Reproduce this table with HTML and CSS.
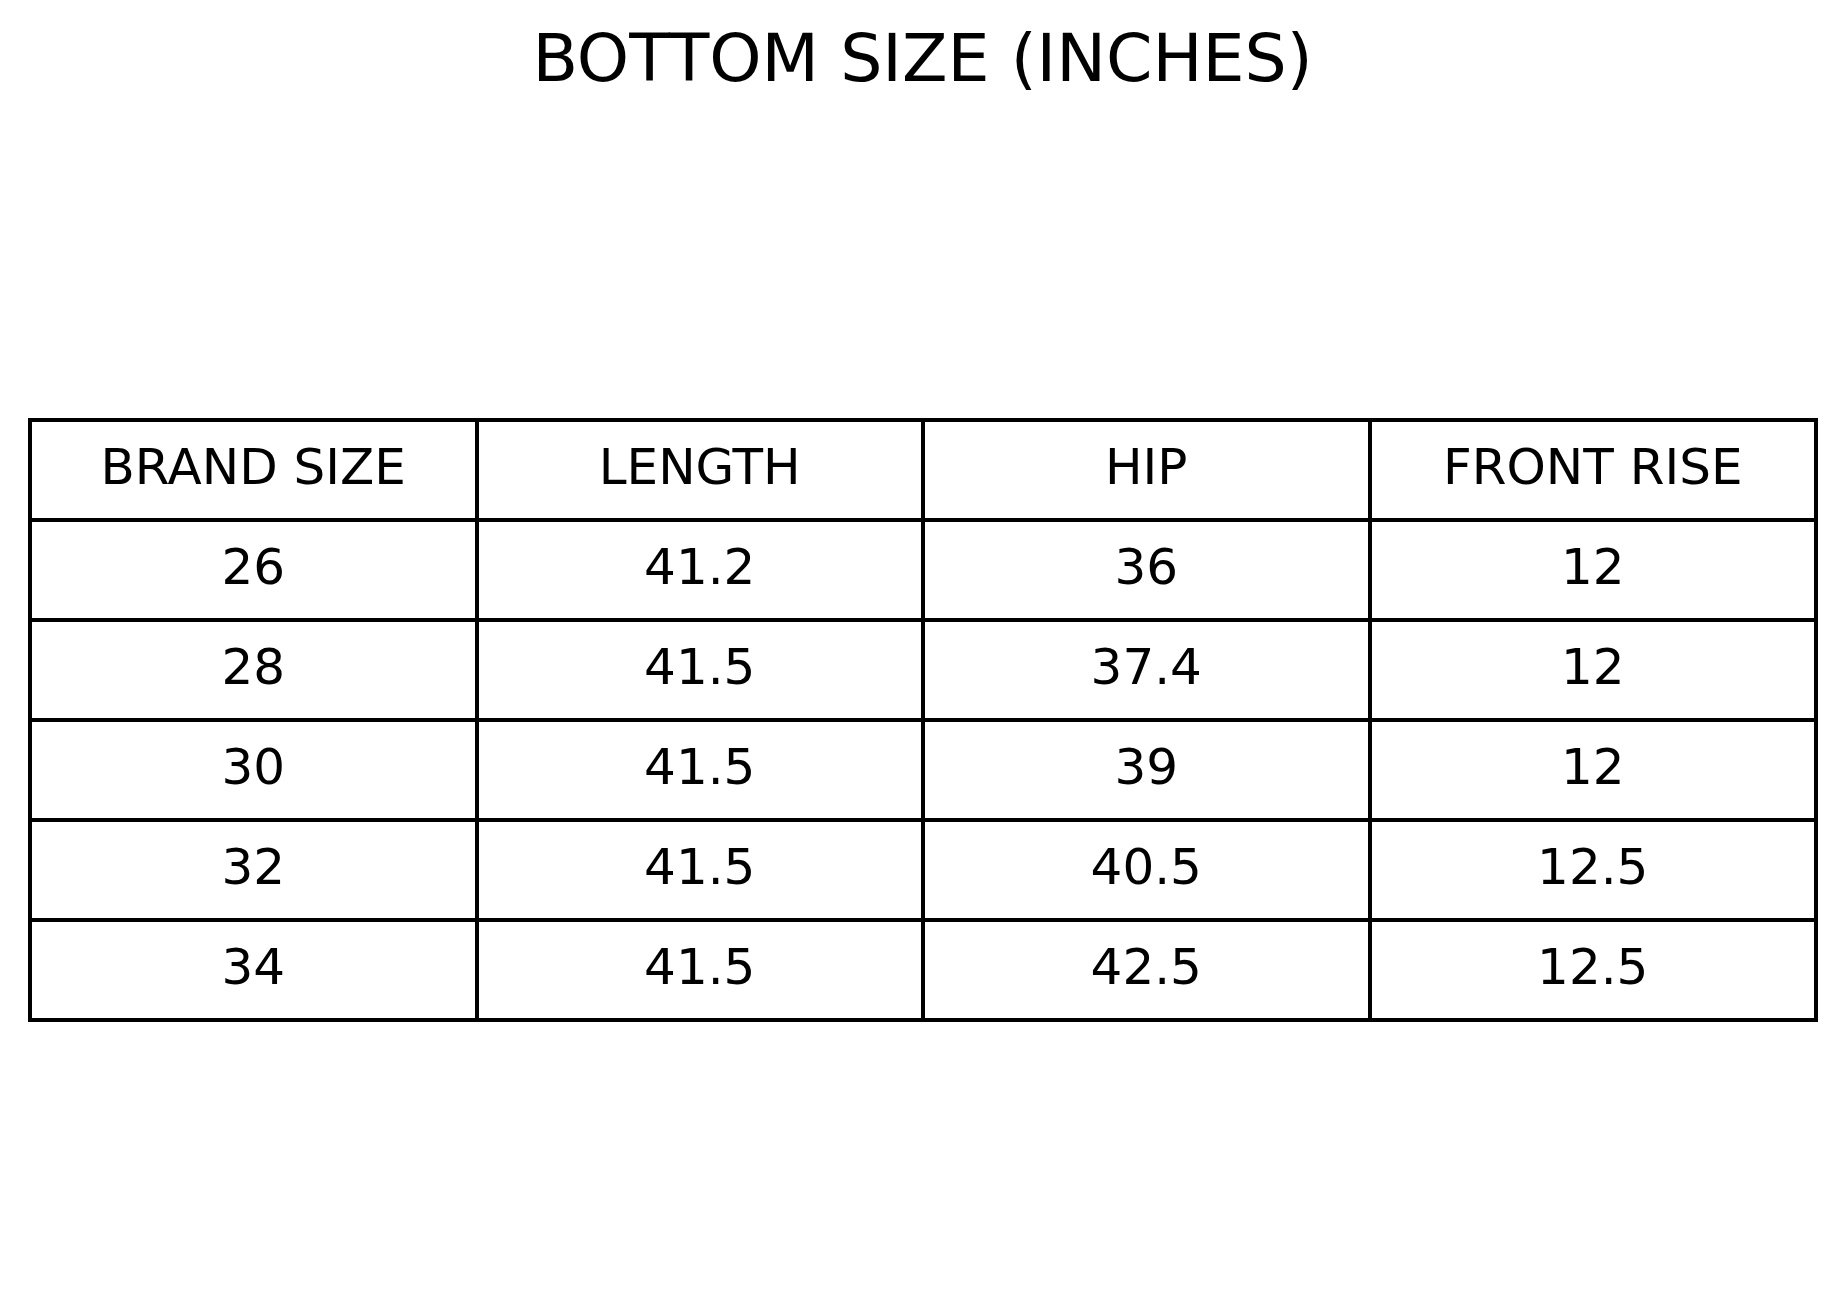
FILE: index.html
```html
<!DOCTYPE html>
<html lang="en">
<head>
<meta charset="utf-8">
<title>Bottom Size (Inches)</title>
<link rel="stylesheet" href="styles.css">
</head>
<body>
<h1 class="title">BOTTOM SIZE (INCHES)</h1>
<div class="chart">
  <div class="cell">BRAND SIZE</div><div class="cell">LENGTH</div><div class="cell">HIP</div><div class="cell">FRONT RISE</div>
  <div class="cell">26</div><div class="cell">41.2</div><div class="cell">36</div><div class="cell">12</div>
  <div class="cell">28</div><div class="cell">41.5</div><div class="cell">37.4</div><div class="cell">12</div>
  <div class="cell">30</div><div class="cell">41.5</div><div class="cell">39</div><div class="cell">12</div>
  <div class="cell">32</div><div class="cell">41.5</div><div class="cell">40.5</div><div class="cell">12.5</div>
  <div class="cell">34</div><div class="cell">41.5</div><div class="cell">42.5</div><div class="cell">12.5</div>
</div>
</body>
</html>
```

FILE: styles.css
```css
html, body {
  margin: 0;
  padding: 0;
  background: #ffffff;
}
body {
  font-family: "DejaVu Sans", "Liberation Sans", sans-serif;
  color: #000000;
  width: 1845px;
  height: 1304px;
}
.title {
  margin: 0;
  padding-top: 19px;
  font-size: 66.5px;
  font-weight: normal;
  line-height: 78px;
  text-align: center;
}
.chart {
  box-sizing: border-box;
  width: 1790px;
  margin: 321px 0 0 28px;
  display: grid;
  grid-template-columns: repeat(4, 1fr);
  border-left: 4px solid #000;
  border-top: 4px solid #000;
}
.cell {
  box-sizing: border-box;
  height: 100px;
  border-right: 4px solid #000;
  border-bottom: 4px solid #000;
  display: flex;
  align-items: center;
  justify-content: center;
  padding-bottom: 7px;
  font-size: 50px;
  line-height: normal;
}
```
